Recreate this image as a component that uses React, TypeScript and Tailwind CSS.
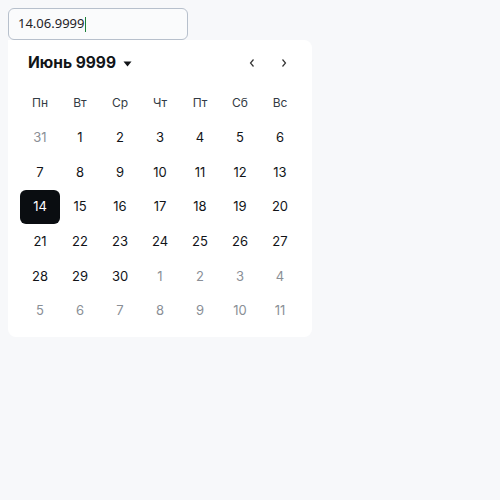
import React from 'react';

// Календарь — выбор даты (июнь 9999)

const weekDays = ['Пн', 'Вт', 'Ср', 'Чт', 'Пт', 'Сб', 'Вс'];

type Day = { n: number; muted?: boolean; selected?: boolean };

const buildDays = (): Day[] => {
  const days: Day[] = [{ n: 31, muted: true }];
  for (let i = 1; i <= 30; i++) days.push({ n: i, selected: i === 14 });
  for (let i = 1; i <= 11; i++) days.push({ n: i, muted: true });
  return days;
};

export default function App() {
  const days = buildDays();

  return (
    <div
      className="min-h-[500px] w-full bg-[#f7f8fa] p-2"
      style={{ fontFamily: 'Inter, "Noto Sans", sans-serif' }}
    >
      {/* поле ввода */}
      <div className="flex h-8 w-[180px] items-center rounded-md border border-[#b7c0cc] bg-[#fafbfc] px-[9px]">
        <span className="text-[13px] text-[#1f2328]" style={{ fontFamily: '"Noto Sans", sans-serif' }}>
          14.06.9999
        </span>
        <span className="ml-px h-[15px] w-px bg-[#1a7f37]" />
      </div>

      {/* выпадающий календарь */}
      <div className="w-[304px] rounded-lg rounded-tl-none bg-white px-3 pt-[7px] pb-[9px]">
        <div className="flex h-8 items-center justify-between pl-2">
          <button className="flex items-center gap-[7px] text-[15.5px] font-bold text-[#111418]">
            Июнь 9999
            <svg width="9" height="6" viewBox="0 0 9 6" className="mt-px">
              <path d="M0.5 0.5 L8.5 0.5 L4.5 5.5 Z" fill="#111418" />
            </svg>
          </button>
          <div className="flex items-center">
            <button className="flex h-8 w-8 items-center justify-center text-[#333]">
              <svg width="8" height="10" viewBox="0 0 8 10">
                <path d="M5.5 1.5 L2.5 5 L5.5 8.5" fill="none" stroke="#333" strokeWidth="1.2" />
              </svg>
            </button>
            <button className="flex h-8 w-8 items-center justify-center text-[#333]">
              <svg width="8" height="10" viewBox="0 0 8 10">
                <path d="M2.5 1.5 L5.5 5 L2.5 8.5" fill="none" stroke="#333" strokeWidth="1.2" />
              </svg>
            </button>
          </div>
        </div>

        <div className="mt-[6.67px] grid grid-cols-7 auto-rows-[34.67px]">
          {weekDays.map((d) => (
            <div key={d} className="flex items-center justify-center text-[12px] text-[#333b44]">
              {d}
            </div>
          ))}
          {days.map((d, i) => (
            <div key={i} className="flex items-center justify-center">
              <button
                className={
                  d.selected
                    ? 'flex h-[34px] w-10 items-center justify-center rounded-md bg-[#0a0d11] text-[13px] text-white'
                    : d.muted
                    ? 'flex h-[34px] w-10 items-center justify-center text-[13px] text-[#8a8f96]'
                    : 'flex h-[34px] w-10 items-center justify-center text-[13px] text-[#111418]'
                }
              >
                {d.n}
              </button>
            </div>
          ))}
        </div>
      </div>
    </div>
  );
}
